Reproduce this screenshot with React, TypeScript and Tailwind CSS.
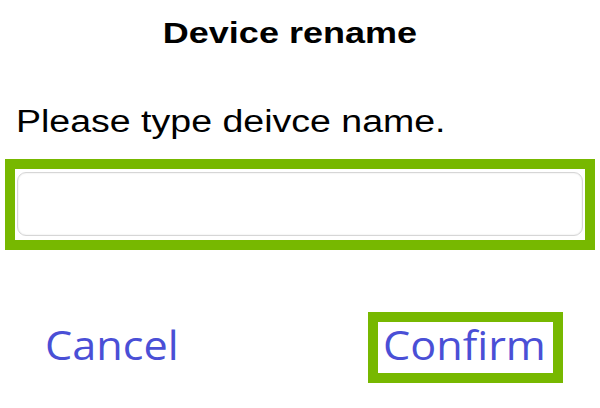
export default function App() {
  return (
    <div className="w-[600px] h-[408px] bg-white flex flex-col overflow-hidden">
      <div className="flex justify-center pr-[20px] pt-[18px]">
        <h2 className="inline-block scale-x-[1.2] font-bold text-[30px] leading-[30px] text-black font-['Liberation_Sans',Arial,sans-serif]">
          Device rename
        </h2>
      </div>
      <p className="mt-[58px] ml-[16px] origin-left scale-x-[1.21] text-[31px] leading-[31px] text-black font-['Liberation_Sans',Arial,sans-serif]">
        Please type deivce name.
      </p>
      <div className="mt-[22px] mx-[5px] h-[91px] border-[10px] border-[#77b800] pl-[2px] pr-[2px] pt-[3px] pb-[4px]">
        <input
          type="text"
          className="w-full h-full rounded-[9px] border border-[#d6d6d6] bg-white shadow-[inset_0_0_2px_rgba(0,0,0,0.12)] outline-none"
        />
      </div>
      <div className="mt-[62px] flex items-start justify-between pl-[45px] pr-[37px]">
        <button className="mt-[10px] origin-left scale-x-[1.08] text-[40px] leading-[46px] text-[#4a4fd6] font-['Open_Sans',sans-serif]">
          Cancel
        </button>
        <div className="w-[195px] h-[71px] border-[10px] border-[#77b800] pl-[5px]">
          <button className="origin-left scale-x-[1.08] text-[40px] leading-[46px] text-[#4a4fd6] font-['Open_Sans',sans-serif]">
            Confirm
          </button>
        </div>
      </div>
    </div>
  );
}
